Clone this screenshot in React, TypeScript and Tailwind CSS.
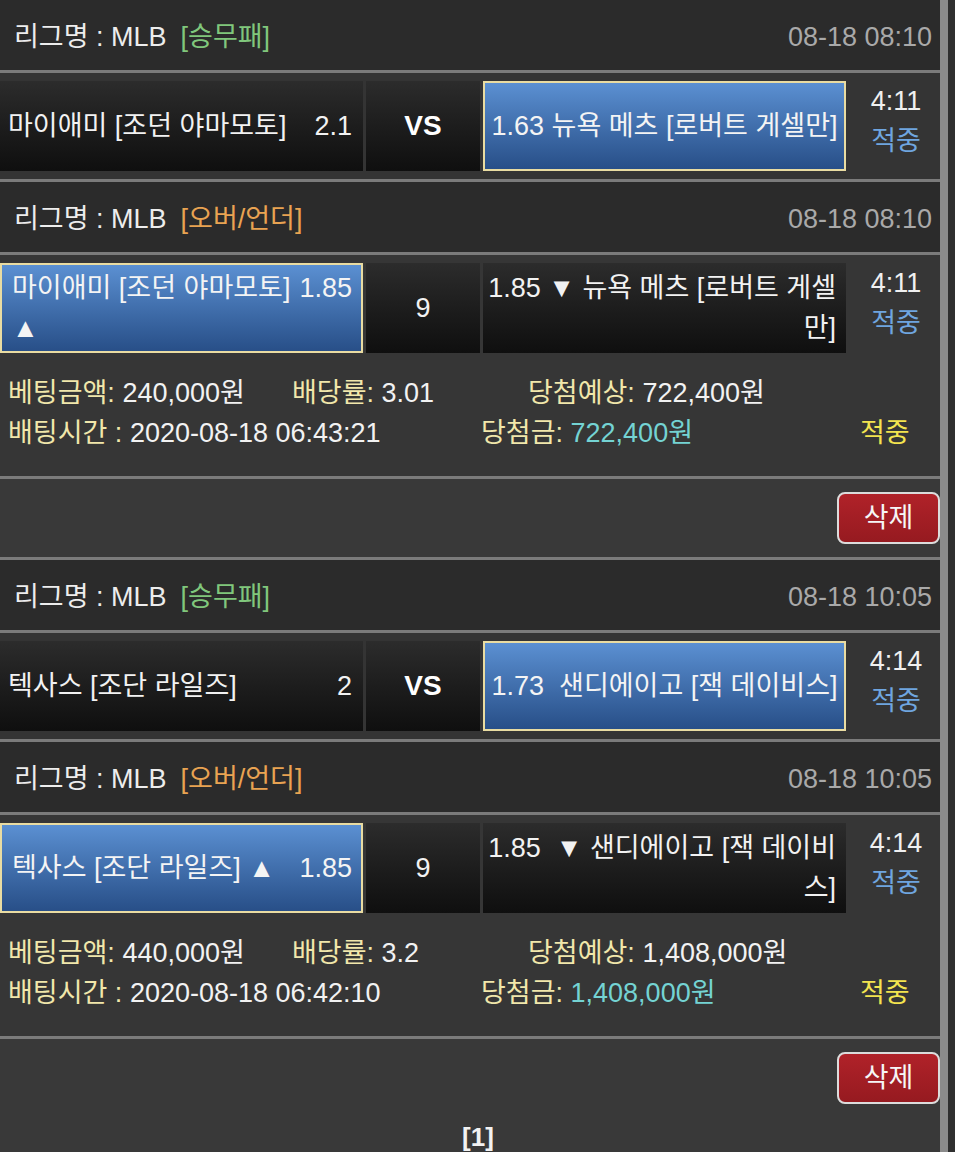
import React from "react";

type Bet = {
  date: string;
  time: string;
  home: string;
  away: string;
  homeOdds1: string;
  ouLeft: string[];
  ouLeftOdds: string;
  ouRight: string[];
  ouLine: string;
  amount: string;
  rate: string;
  expect: string;
  betTime: string;
  win: string;
};

const bets: Bet[] = [
  {
    date: "08-18 08:10",
    time: "4:11",
    home: "마이애미 [조던 야마모토]",
    away: "1.63 뉴욕 메츠 [로버트 게셀만]",
    homeOdds1: "2.1",
    ouLeft: ["마이애미 [조던 야마모토]", "▲"],
    ouLeftOdds: "1.85",
    ouRight: ["1.85 ▼ 뉴욕 메츠 [로버트 게셀", "만]"],
    ouLine: "9",
    amount: "240,000원",
    rate: "3.01",
    expect: "722,400원",
    betTime: "2020-08-18 06:43:21",
    win: "722,400원",
  },
  {
    date: "08-18 10:05",
    time: "4:14",
    home: "텍사스 [조단 라일즈]",
    away: "1.73\u00a0 샌디에이고 [잭 데이비스]",
    homeOdds1: "2",
    ouLeft: ["텍사스 [조단 라일즈] ▲"],
    ouLeftOdds: "1.85",
    ouRight: ["1.85\u00a0 ▼ 샌디에이고 [잭 데이비", "스]"],
    ouLine: "9",
    amount: "440,000원",
    rate: "3.2",
    expect: "1,408,000원",
    betTime: "2020-08-18 06:42:10",
    win: "1,408,000원",
  },
];

const dark = "bg-linear-to-b from-[#2c2c2c] to-[#0f0f0f]";
const blue = "bg-linear-to-b from-[#5b90d2] to-[#284f88] border-2 border-[#e9dca2]";

function Line() {
  return <div className="h-[3px] bg-[#7b7b7b]" />;
}

function Header(props: { kind: string; color: string; date: string }) {
  return (
    <div className="h-[70px] bg-[#2b2b2b] flex items-center justify-between pl-[14px] pr-[8px] pt-[5px]">
      <div className="flex gap-[14px]">
        <span className="text-[#ededed]">리그명 : MLB</span>
        <span className={props.color}>{props.kind}</span>
      </div>
      <span className="text-[#a9a9a9]">{props.date}</span>
    </div>
  );
}

function TimeCol(props: { time: string }) {
  return (
    <div className="w-[94px] h-[90px] flex flex-col items-center pl-[6px] leading-[40px]">
      <span className="text-[#f0f0f0]">{props.time}</span>
      <span className="text-[#6fa5df]">적중</span>
    </div>
  );
}

function Block(props: { b: Bet; last: boolean }) {
  const b = props.b;
  return (
    <div>
      <Header kind="[승무패]" color="text-[#80c77c]" date={b.date} />
      <Line />
      <div className="bg-[#343434] py-[8px] flex">
        <div className={`w-[363px] h-[90px] ${dark} flex items-center justify-between pl-[8px] pr-[11px] text-[#f2f2f2]`}>
          <span>{b.home}</span>
          <span>{b.homeOdds1}</span>
        </div>
        <div className={`ml-[3px] w-[114px] h-[90px] ${dark} flex items-center justify-center font-bold text-[28px] text-white`}>
          VS
        </div>
        <div className={`ml-[3px] w-[363px] h-[90px] ${blue} flex items-center justify-center text-[#f4f4f4]`}>
          {b.away}
        </div>
        <TimeCol time={b.time} />
      </div>
      <Line />
      <Header kind="[오버/언더]" color="text-[#e9a352]" date={b.date} />
      <Line />
      <div className="bg-[#363636]">
        <div className="py-[8px] flex">
          <div className={`w-[363px] h-[90px] ${blue} flex flex-col justify-center pl-[10px] pr-[9px] leading-[40px] text-[#f4f4f4]`}>
            <div className="flex justify-between">
              <span>{b.ouLeft[0]}</span>
              <span>{b.ouLeftOdds}</span>
            </div>
            {b.ouLeft[1] && <div>{b.ouLeft[1]}</div>}
          </div>
          <div className={`ml-[3px] w-[114px] h-[90px] ${dark} flex items-center justify-center text-[#f2f2f2]`}>
            {b.ouLine}
          </div>
          <div className={`ml-[3px] w-[363px] h-[90px] ${dark} flex flex-col justify-center items-end pr-[10px] leading-[40px] text-[#f2f2f2]`}>
            {b.ouRight.map((t) => (
              <div key={t}>{t}</div>
            ))}
          </div>
          <TimeCol time={b.time} />
        </div>
        <div className="pt-[12px] pb-[23px] pl-[8px] leading-[40px]">
          <div className="flex">
            <div className="w-[284px]">
              <span className="text-[#f1e7ab]">베팅금액:</span>
              <span className="text-[#f2f2f2]"> {b.amount}</span>
            </div>
            <div className="w-[236px]">
              <span className="text-[#f1e7ab]">배당률:</span>
              <span className="text-[#f2f2f2]"> {b.rate}</span>
            </div>
            <div>
              <span className="text-[#f1e7ab]">당첨예상:</span>
              <span className="text-[#f2f2f2]"> {b.expect}</span>
            </div>
          </div>
          <div className="flex">
            <div className="w-[473px]">
              <span className="text-[#f1e7ab]">배팅시간 :</span>
              <span className="text-[#f2f2f2]"> {b.betTime}</span>
            </div>
            <div className="w-[379px]">
              <span className="text-[#f1e7ab]">당첨금:</span>
              <span className="text-[#74d3d3]"> {b.win}</span>
            </div>
            <div className="text-[#f3e44f]">적중</div>
          </div>
        </div>
      </div>
      <Line />
      <div className="h-[78px] bg-[#393939] flex items-center justify-end">
        <button
          type="button"
          className="w-[103px] h-[52px] rounded-[8px] border-2 border-[#dcdcdc] bg-linear-to-b from-[#b02229] to-[#961a20] text-[#f6f6f6] text-[27px]"
        >
          삭제
        </button>
      </div>
      {!props.last && <Line />}
    </div>
  );
}

export default function App() {
  return (
    <div className="w-[955px] h-[1152px] overflow-hidden flex bg-[#393939] text-[27px] font-['Liberation_Sans','Noto_Sans_CJK_KR',sans-serif]">
      <div className="w-[940px]">
        {bets.map((b, i) => (
          <Block key={b.date} b={b} last={i === bets.length - 1} />
        ))}
        <div className="h-[40px] flex items-center justify-center font-bold text-[26px] text-[#f2f2f2] pl-[16px]">
          [1]
        </div>
      </div>
      <div className="w-[8px] bg-[#8b8b8b]" />
      <div className="flex-1 bg-[#2f2f2f]" />
    </div>
  );
}
